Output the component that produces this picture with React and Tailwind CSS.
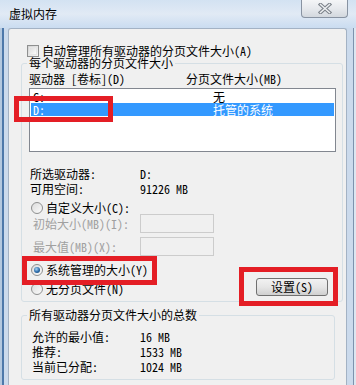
import React from "react";

function Radio({ checked }) {
  return (
    <span className="relative w-[12px] h-[12px] rounded-full border border-[#8e8f8f] bg-gradient-to-br from-[#dcdcdc] to-[#fbfbfb] flex items-center justify-center shrink-0">
      {checked ? (
        <span className="w-[6px] h-[6px] rounded-full bg-[radial-gradient(circle_at_40%_35%,#a9d6f7,#2a6aa8_55%,#123f6c)]" />
      ) : null}
    </span>
  );
}

function Checkbox() {
  return (
    <span className="w-[12px] h-[12px] border border-[#8e8f8f] bg-gradient-to-br from-[#d2d2d2] to-[#f6f6f6] shrink-0 flex items-center justify-center">
      <span className="w-[8px] h-[8px] border border-[#e6e6e6] bg-gradient-to-br from-[#dedede] to-[#fafafa]" />
    </span>
  );
}

export default function App() {
  return (
    <div className="relative w-[356px] h-[385px] overflow-hidden bg-[#c9d9ec] text-[12px] leading-[12px] text-black font-[family-name:Noto_Sans_Mono_CJK_SC,Noto_Sans_CJK_SC,sans-serif]">
      {/* title bar */}
      <div className="h-[28px] flex items-start justify-between bg-gradient-to-b from-[#d3e2f2] via-[#e1eaf5] to-[#cadcf0]">
        <div className="pl-[9px] pt-[8px] leading-[12px]">虚拟内存</div>
        <div className="mr-[8px] w-[47px] h-[18px] rounded-b-[4px] border border-t-0 border-[#8893a2] bg-gradient-to-b from-[#f4f5f7] via-[#e6e9ed] to-[#d3d8de] flex items-center justify-center">
          <svg width="14" height="11" viewBox="0 0 14 11">
            <path d="M2.5 1.5 L11.5 9.5 M11.5 1.5 L2.5 9.5" stroke="#7d838b" strokeWidth="3.6" strokeLinecap="square" fill="none" />
            <path d="M2.5 1.5 L11.5 9.5 M11.5 1.5 L2.5 9.5" stroke="#eef0f2" strokeWidth="1.5" strokeLinecap="square" fill="none" />
          </svg>
        </div>
      </div>

      <div className="flex h-[357px]">
        {/* left frame */}
        <div className="w-[8px] flex">
          <div className="w-[2px] bg-[#b3c8df]" />
          <div className="w-[2px] bg-[#4d78aa]" />
          <div className="w-[4px] bg-[#cbdaec]" />
        </div>

        {/* client */}
        <div className="w-[339px] bg-[#f0f0f0] border border-b-0 border-[#a3b2c4] rounded-t-[3px]">
          {/* auto manage checkbox */}
          <div className="mt-[15px] h-[13px] ml-[18px] flex items-center">
            <Checkbox />
            <span className="ml-[3px]">自动管理所有驱动器的分页文件大小(A)</span>
          </div>

          {/* group 1 */}
          <fieldset className="ml-[12px] w-[322px] border border-[#d5dfe5] rounded-[3px] pb-[5px]">
            <legend className="ml-[5px] px-[2px] leading-[12px]">每个驱动器的分页文件大小</legend>

            <div className="mt-[3px] h-[14px] pl-[7px] flex items-center">
              <span className="w-[157px]">驱动器 [卷标](D)</span>
              <span>分页文件大小(MB)</span>
            </div>

            <div className="mt-[2px] ml-[7px] w-[307px] h-[64px] border border-[#828790] bg-white pt-[1px]">
              <div className="mx-[1px] h-[13px] pl-[2px] flex items-center">
                <span className="w-[180px]">C:</span>
                <span>无</span>
              </div>
              <div className="mx-[1px] h-[13px] pl-[2px] flex items-center bg-[#3399ff] text-white">
                <span className="w-[180px]">D:</span>
                <span>托管的系统</span>
              </div>
            </div>

            <div className="mt-[14px] h-[15px] pl-[8px] flex items-center">
              <span className="w-[110px]">所选驱动器:</span>
              <span>D:</span>
            </div>
            <div className="h-[15px] pl-[8px] flex items-center">
              <span className="w-[110px]">可用空间:</span>
              <span>91226 MB</span>
            </div>

            <div className="mt-[5px] h-[13px] pl-[9px] flex items-center">
              <Radio />
              <span className="ml-[3px]">自定义大小(C):</span>
            </div>

            <div className="h-[19px] pl-[11px] flex items-center">
              <span className="w-[107px] text-[#a0a0a0]">初始大小(MB)(I):</span>
              <span className="w-[74px] h-[19px] border border-[#cccccc] bg-[#f0f0f0]" />
            </div>
            <div className="mt-[4px] h-[19px] pl-[11px] flex items-center">
              <span className="w-[107px] text-[#a0a0a0]">最大值(MB)(X):</span>
              <span className="w-[74px] h-[19px] border border-[#cccccc] bg-[#f0f0f0]" />
            </div>

            <div className="mt-[7px] flex items-end justify-between pr-[14px]">
              <div className="flex flex-col">
                <div className="h-[14px] pl-[9px] flex items-center">
                  <Radio checked />
                  <span className="ml-[3px]">系统管理的大小(Y)</span>
                </div>
                <div className="mt-[5px] h-[14px] pl-[9px] flex items-center">
                  <Radio />
                  <span className="ml-[3px]">无分页文件(N)</span>
                </div>
              </div>
              <div className="w-[72px] h-[18px] rounded-[3px] border border-[#707070] bg-gradient-to-b from-[#f2f2f2] via-[#e6e6e6] to-[#d0d0d0] flex items-center justify-center">
                设置(S)
              </div>
            </div>
          </fieldset>

          {/* group 2 */}
          <fieldset className="mt-[7px] ml-[12px] w-[314px] border border-[#d5dfe5] rounded-[3px] pb-[5px]">
            <legend className="ml-[5px] px-[2px] leading-[12px]">所有驱动器分页文件大小的总数</legend>
            <div className="mt-[8px] h-[15px] pl-[10px] flex items-center">
              <span className="w-[108px]">允许的最小值:</span>
              <span>16 MB</span>
            </div>
            <div className="h-[15px] pl-[10px] flex items-center">
              <span className="w-[108px]">推荐:</span>
              <span>1533 MB</span>
            </div>
            <div className="h-[15px] pl-[10px] flex items-center">
              <span className="w-[108px]">当前已分配:</span>
              <span>1024 MB</span>
            </div>
          </fieldset>
        </div>

        {/* right frame */}
        <div className="w-[9px] flex">
          <div className="w-[6px] bg-[#cbdaec]" />
          <div className="w-[1px] bg-[#7d93ad]" />
          <div className="w-[2px] bg-[#dde6f0]" />
        </div>
      </div>

      {/* red annotation boxes */}
      <div className="absolute left-[14px] top-[96px] w-[99px] h-[26px] border-[5px] border-[#e41e25]" />
      <div className="absolute left-[22px] top-[256px] w-[135px] h-[29px] border-[5px] border-[#e41e25]" />
      <div className="absolute left-[239px] top-[267px] w-[99px] h-[39px] border-[5px] border-[#e41e25]" />
    </div>
  );
}
